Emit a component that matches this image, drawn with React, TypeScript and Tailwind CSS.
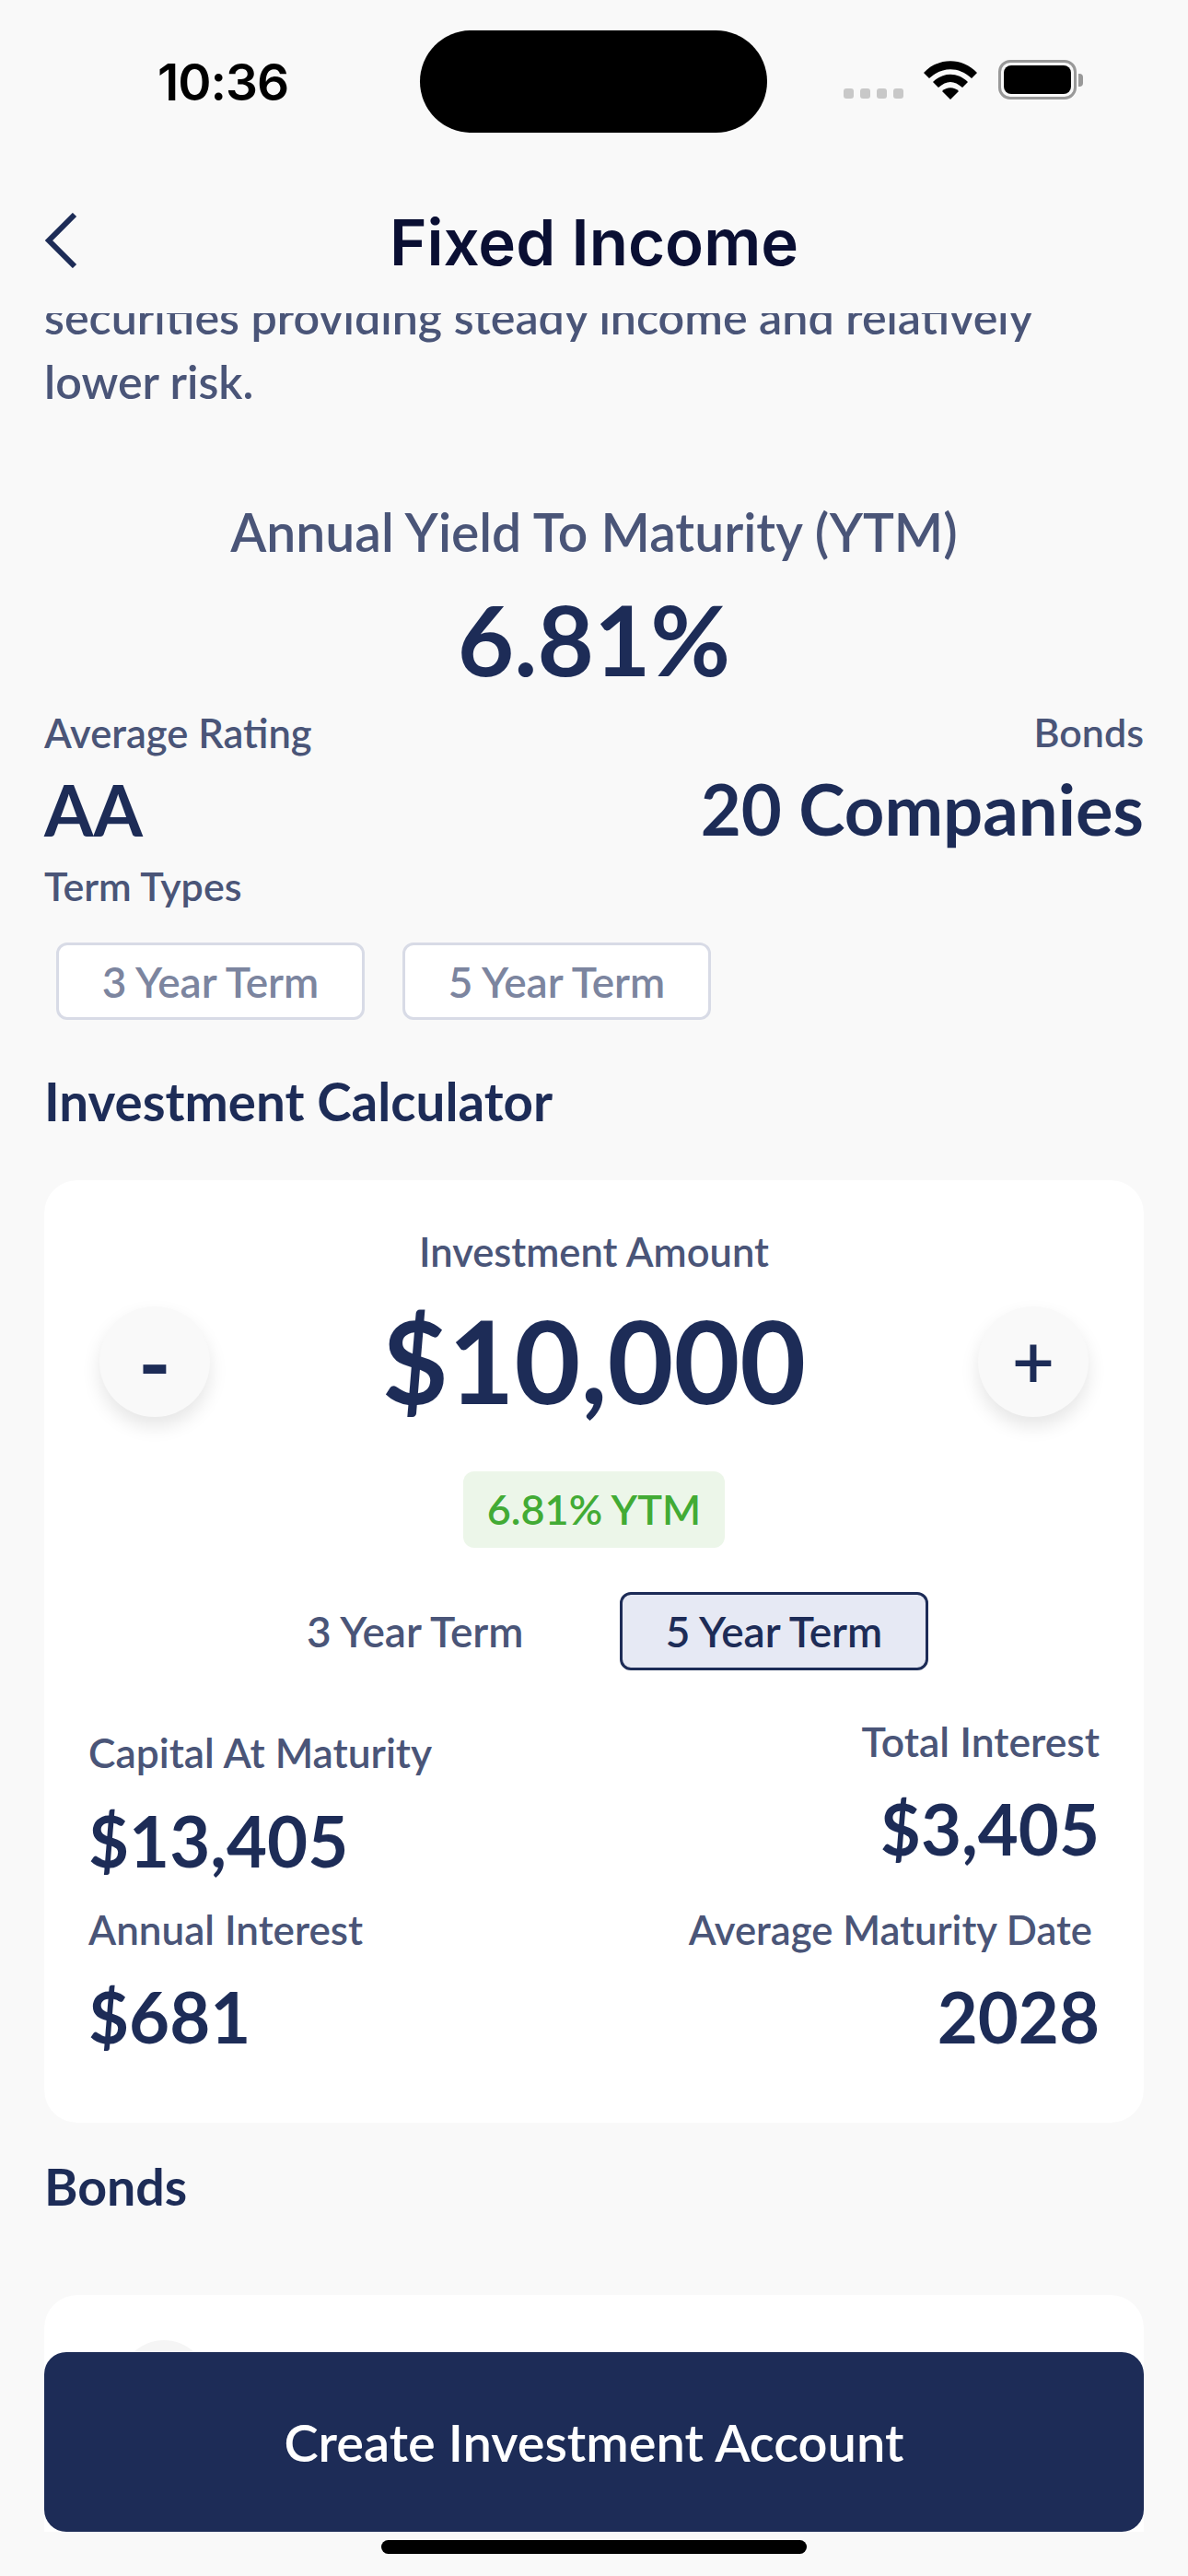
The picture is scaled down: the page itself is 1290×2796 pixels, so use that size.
const lato = { fontFamily: 'Lato, "Noto Sans", sans-serif' }

function StatusBar() {
  return (
    <div className="flex h-[144px] shrink-0 items-start pt-[33px]">
      <div className="w-[456px] pl-[171px] pt-[24px] font-['Inter',sans-serif] text-[55px] leading-[64px] font-semibold tracking-[-1px] text-black">
        10:36
      </div>
      <div className="h-[111px] w-[377px] rounded-[56px] bg-black" />
      <div className="ml-[83px] flex items-end pt-[32px]">
        <div className="mb-[1px] flex gap-[7px]">
          <span className="h-[11px] w-[11px] rounded-[3px] bg-[#c8c8c8]" />
          <span className="h-[11px] w-[11px] rounded-[3px] bg-[#c8c8c8]" />
          <span className="h-[11px] w-[11px] rounded-[3px] bg-[#c8c8c8]" />
          <span className="h-[11px] w-[11px] rounded-[3px] bg-[#c8c8c8]" />
        </div>
        <svg className="ml-[22px]" width="58" height="42" viewBox="0 0 58 42">
          <path d="M0 13 C16 -4 42 -4 58 13 L52 19 C38 6 20 6 6 19 Z" fill="#000" />
          <path d="M10 23 C21 12 37 12 48 23 L42 29 C33 21 25 21 16 29 Z" fill="#000" />
          <path d="M20 33 C25 28 33 28 38 33 L29 42 Z" fill="#000" />
        </svg>
        <div className="ml-[23px] flex items-center">
          <div className="h-[43px] w-[85px] rounded-[13px] border-[3px] border-[#999999] p-[3px]">
            <div className="h-full w-full rounded-[8px] bg-black" />
          </div>
          <div className="ml-[2px] h-[14px] w-[5px] rounded-r-[4px] bg-[#999999]" />
        </div>
      </div>
    </div>
  )
}

function Stat({ label, value, right, top, gap, labelClass }: { label: string; value: string; right?: boolean; top: string; gap: string; labelClass: string }) {
  return (
    <div className={`${right ? 'text-right' : 'text-left'} ${top}`}>
      <div className={`leading-[54px] font-semibold text-[#4a5578] ${labelClass}`}>{label}</div>
      <div className={`${gap} text-[76px] leading-[90px] font-bold text-[#1d2c57]`}>{value}</div>
    </div>
  )
}

export default function App() {
  return (
    <div style={lato} className="relative flex h-[2796px] w-[1290px] flex-col overflow-hidden bg-[#f9f9f9]">
      <StatusBar />

      {/* Header */}
      <div className="relative z-10 flex h-[196px] shrink-0 items-start justify-center bg-[#f9f9f9] pt-[79px]">
        <svg className="absolute top-[87px] left-[48px]" width="36" height="60" viewBox="0 0 36 60" fill="none" stroke="#1d2c57" strokeWidth="6">
          <path d="M33 2 L5 30 L33 58" />
        </svg>
        <h1 className="font-['Inter',sans-serif] text-[69px] leading-[80px] font-semibold text-[#0a0f33]">Fixed Income</h1>
      </div>

      {/* Scrolled content */}
      <div className="min-h-0 flex-1 overflow-hidden px-[48px]">
        <p className="mt-[-31px] w-[1100px] text-[50.2px] leading-[70px] font-semibold text-[#4a5578]">
          securities providing steady income and relatively lower risk.
        </p>

        <div className="mt-[94px] text-center">
          <div className="text-[57px] leading-[68px] font-semibold text-[#4a5578]">Annual Yield To Maturity (YTM)</div>
          <div className="mt-[19px] text-[106px] leading-[126px] font-bold text-[#1d2c57]">6.81%</div>
        </div>

        <div className="mt-[12px] flex items-start justify-between">
          <div>
            <div className="text-[43.5px] leading-[54px] font-semibold text-[#4a5578]">Average Rating</div>
            <div className="mt-[9px] text-[77px] leading-[94px] font-bold text-[#1d2c57]">AA</div>
          </div>
          <div className="text-right">
            <div className="text-[43px] leading-[54px] font-semibold text-[#4a5578]">Bonds</div>
            <div className="mt-[9px] text-[76px] leading-[94px] font-bold text-[#1d2c57]">20 Companies</div>
          </div>
        </div>

        <div className="mt-[10px] text-[43px] leading-[54px] font-semibold text-[#4a5578]">Term Types</div>
        <div className="mt-[34px] flex gap-[41px] pl-[13px]">
          <div className="flex h-[84px] w-[335px] items-center justify-center rounded-[12px] border-[3px] border-[#d8dbe6] bg-white text-[46px] font-semibold text-[#7c859f]">
            3 Year Term
          </div>
          <div className="flex h-[84px] w-[335px] items-center justify-center rounded-[12px] border-[3px] border-[#d8dbe6] bg-white text-[46px] font-semibold text-[#7c859f]">
            5 Year Term
          </div>
        </div>

        <h2 className="mt-[54px] text-[56.5px] leading-[68px] font-bold text-[#1d2c57]">Investment Calculator</h2>

        {/* Calculator card */}
        <div className="mt-[52px] h-[1023px] rounded-[36px] bg-white px-[48px] pt-[50px]">
          <div className="text-center text-[43.5px] leading-[54px] font-semibold text-[#4a5578]">Investment Amount</div>
          <div className="mt-[33px] flex items-center justify-between px-[12px]">
            <button className="flex h-[120px] w-[120px] items-center justify-center rounded-full bg-[#f9f9f9] text-[96px] leading-none font-bold text-[#1d2c57] shadow-[0_10px_20px_rgba(0,0,0,0.1)]">
              -
            </button>
            <div className="h-[120px] text-[124px] leading-[116px] font-bold text-[#1d2c57]">$10,000</div>
            <button className="flex h-[120px] w-[120px] items-center justify-center rounded-full bg-[#f9f9f9] pb-[5px] text-[80px] leading-none font-semibold text-[#1d2c57] shadow-[0_10px_20px_rgba(0,0,0,0.1)]">
              +
            </button>
          </div>
          <div className="mt-[59px] flex justify-center">
            <div className="flex h-[83px] w-[284px] items-center justify-center rounded-[12px] bg-[#ecf6e9] text-[45px] font-semibold text-[#42ab35]">
              6.81% YTM
            </div>
          </div>
          <div className="mt-[48px] flex items-center pl-[237px]">
            <div className="w-[233px] text-center text-[46px] font-semibold whitespace-nowrap text-[#4a5578]">3 Year Term</div>
            <div className="ml-[107px] flex h-[85px] w-[335px] items-center justify-center rounded-[12px] border-[3px] border-[#1d2c57] bg-[#e6e9f4] text-[46px] font-semibold text-[#1d2c57]">
              5 Year Term
            </div>
          </div>

          <div className="mt-[50px] flex items-start justify-between">
            <Stat label="Capital At Maturity" value="$13,405" top="pt-[12px]" gap="mt-[24px]" labelClass="text-[44.3px]" />
            <Stat label="Total Interest" value="$3,405" right top="pt-0" gap="mt-[23px]" labelClass="text-[44.5px]" />
          </div>
          <div className="mt-[24px] flex items-start justify-between">
            <Stat label="Annual Interest" value="$681" top="pt-0" gap="mt-[23px]" labelClass="text-[44px]" />
            <Stat label="Average Maturity Date" value="2028" right top="pt-0" gap="mt-[23px]" labelClass="pr-[8px] text-[43.6px]" />
          </div>
        </div>

        <h2 className="mt-[35px] text-[55.5px] leading-[68px] font-bold text-[#1d2c57]">Bonds</h2>

        {/* Bonds card, cut off by the footer */}
        <div className="mt-[84px] h-[400px] rounded-[36px] bg-white px-[82px] pt-[49px]">
          <div className="h-[96px] w-[96px] rounded-full bg-[#f5f5f5]" />
        </div>
      </div>

      {/* Fixed footer */}
      <div className="absolute right-[48px] bottom-[48px] left-[48px] flex h-[195px] items-center justify-center rounded-[24px] bg-[#1d2c57] text-[56px] font-semibold text-white">
        Create Investment Account
      </div>
      <div className="absolute bottom-0 left-0 h-[48px] w-full bg-[#f9f9f9]">
        <div className="mx-auto mt-[9px] h-[15px] w-[462px] rounded-full bg-black" />
      </div>
    </div>
  )
}
